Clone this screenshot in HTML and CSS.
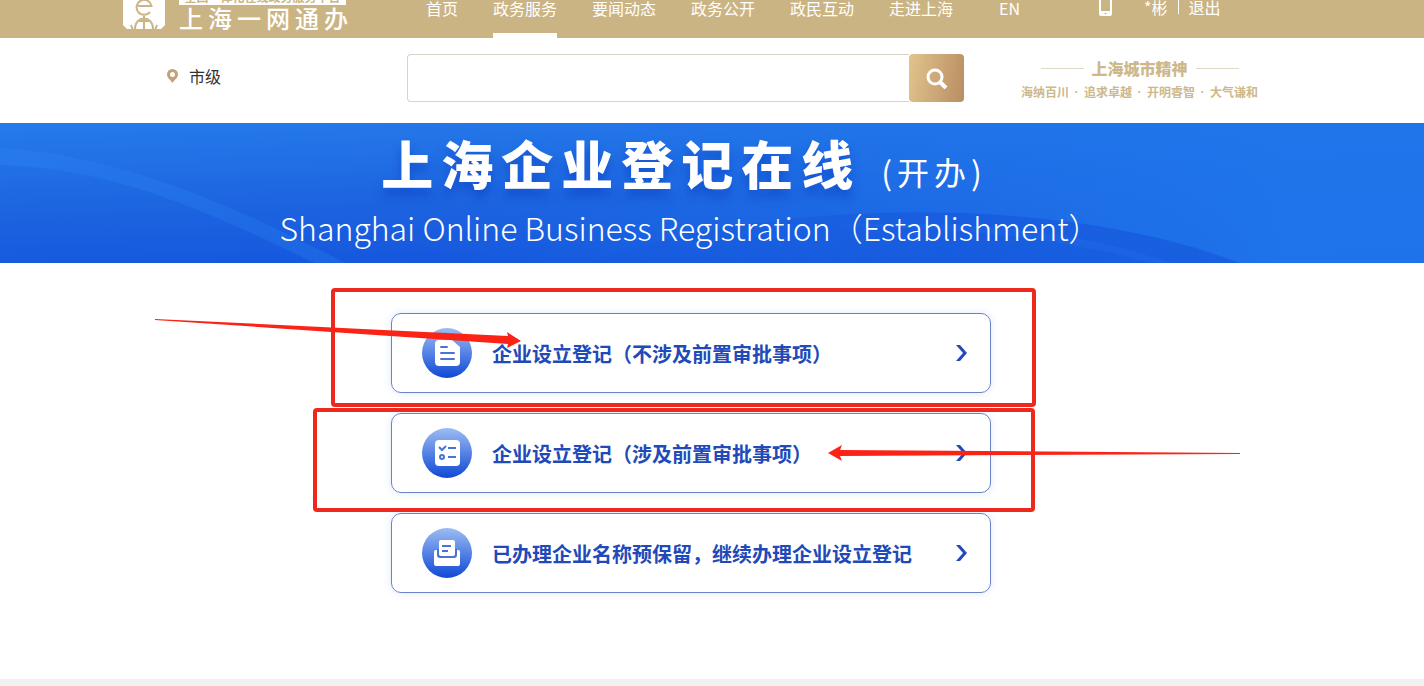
FILE: index.html
```
<!DOCTYPE html>
<html lang="zh-CN">
<head>
    <meta charset="UTF-8">
    <meta name="viewport" content="width=device-width, initial-scale=1.0">
    <title>上海企业登记在线</title>
    <link rel="stylesheet" href="styles.css">
</head>
<body>

    <header class="topbar">
        <a class="logo" href="#">
            <svg class="logo-mark" width="42" height="42" viewBox="0 0 42 42">
                <path d="M0 3Q0 0 3 0H39Q42 0 42 3V37L38 41H4L0 37Z" fill="#fff"/>
                <g fill="none" stroke="#cbb483" stroke-width="2">
                    <path d="M15 18H28.500A7.500 7.500 0 1 0 27 24"/>
                    <path d="M12 41C12 27 30 27 30 41M21 28V41M16 33H26"/>
                    <path d="M8 37L9.500 41M34 37L32.500 41"/>
                </g>
            </svg>
            <span class="logo-text">
                <span class="logo-tag">全国一体化在线政务服务平台</span>
                <span class="logo-name">上海一网通办</span>
            </span>
        </a>
        <nav class="nav">
            <a href="#">首页</a>
            <a href="#" class="active">政务服务</a>
            <a href="#">要闻动态</a>
            <a href="#">政务公开</a>
            <a href="#">政民互动</a>
            <a href="#">走进上海</a>
            <a href="#" class="lang">EN</a>
        </nav>
        <div class="user">
            <a href="#" class="phone" aria-label="手机版">
                <svg width="13" height="18" viewBox="0 0 13 18">
                    <path fill="#fff" fill-rule="evenodd" d="M2 0H11Q13 0 13 2V16Q13 18 11 18H2Q0 18 0 16V2Q0 0 2 0ZM2 2V13H11V2ZM5 15L6.500 16.500L8 15Z"/>
                </svg>
            </a>
            <a href="#">*彬</a>
            <span class="divider"></span>
            <a href="#">退出</a>
        </div>
    </header>

    <div class="toolbar">
        <a class="region" href="#">
            <svg width="11" height="14" viewBox="0 0 11 14">
                <path fill="#c4a077" fill-rule="evenodd" d="M5.500 0A5.500 5.500 0 0 1 11 5.500C11 9 7 11 5.500 14C4 11 0 9 0 5.500A5.500 5.500 0 0 1 5.500 0ZM5.500 3A2.500 2.500 0 1 0 5.500 8A2.500 2.500 0 1 0 5.500 3Z"/>
            </svg>
            市级
        </a>
        <form class="search">
            <input type="text" aria-label="搜索">
            <button type="button" aria-label="搜索">
                <svg width="22" height="22" viewBox="0 0 22 22" fill="none" stroke="#fff">
                    <circle cx="9" cy="10" r="7" stroke-width="3"/>
                    <path d="M14 15L20 21" stroke-width="4"/>
                </svg>
            </button>
        </form>
        <div class="slogan">
            <div class="slogan-title">上海城市精神</div>
            <div class="slogan-text">
                <span>海纳百川</span><i>·</i><span>追求卓越</span><i>·</i><span>开明睿智</span><i>·</i><span>大气谦和</span>
            </div>
        </div>
    </div>

    <section class="banner">
        <svg class="banner-bg" viewBox="0 0 1424 140" preserveAspectRatio="none">
            <defs>
                <linearGradient id="wave" x1="0" x2="1" y1="0" y2="0">
                    <stop offset="0" stop-color="#2b7ff0" stop-opacity=".5"/>
                    <stop offset="1" stop-color="#2376ea" stop-opacity=".4"/>
                </linearGradient>
                <linearGradient id="deep" x1="0" x2="1" y1="0" y2="0">
                    <stop offset="0" stop-color="#1350d8" stop-opacity="0.1"/>
                    <stop offset=".6" stop-color="#1350d8" stop-opacity=".5"/>
                    <stop offset="1" stop-color="#1350d8" stop-opacity=".5"/>
                </linearGradient>
            </defs>
            <path d="M0 25C120 32 240 85 345 140H315C220 95 120 45 0 42Z" fill="url(#wave)"/>
            <path d="M590 140C760 75 1060 70 1240 140Z" fill="url(#deep)"/>
            <path d="M830 103C970 95 1090 110 1170 140H1150C1060 115 960 104 830 103Z" fill="#2b76ee" fill-opacity=".2"/>
        </svg>
        <div class="banner-text">
            <h1>上海企业登记在线<span>(开办)</span></h1>
            <p>Shanghai Online Business Registration（Establishment）</p>
        </div>
    </section>

    <main class="main">
        <div class="entries">
            <a class="entry" href="#">
                <svg class="entry-icon" viewBox="0 0 50 50">
                    <defs>
                        <linearGradient id="disc" x1="0" x2="0" y1="0" y2="1">
                            <stop offset="0" stop-color="#9dbcf2"/>
                            <stop offset="1" stop-color="#0f49d6"/>
                        </linearGradient>
                    </defs>
                    <circle cx="25" cy="25" r="25" fill="url(#disc)"/>
                    <path d="M17 12H30L38 19V34Q38 38 34 38H17Q13 38 13 34V16Q13 12 17 12Z" fill="#fff"/>
                    <path d="M19 19H25M19 25H32M19 31H32" stroke="#4a74d4" stroke-width="2" stroke-linecap="round"/>
                </svg>
                <span class="entry-name">企业设立登记（不涉及前置审批事项）</span>
                <svg class="arrow" viewBox="0 0 12 16"><path d="M0 0H4L11 8L4 16H0L7 8Z"/></svg>
            </a>
            <a class="entry" href="#">
                <svg class="entry-icon" viewBox="0 0 50 50">
                    <circle cx="25" cy="25" r="25" fill="url(#disc)"/>
                    <rect x="13" y="12" width="25" height="26" rx="4" fill="#fff"/>
                    <g fill="none" stroke="#4a74d4" stroke-width="2">
                        <path d="M17 19L20 22L24 18M26 20H34M26 29H34"/>
                        <circle cx="20" cy="29" r="2"/>
                    </g>
                </svg>
                <span class="entry-name">企业设立登记（涉及前置审批事项）</span>
                <svg class="arrow" viewBox="0 0 12 16"><path d="M0 0H4L11 8L4 16H0L7 8Z"/></svg>
            </a>
            <a class="entry" href="#">
                <svg class="entry-icon" viewBox="0 0 50 50">
                    <circle cx="25" cy="25" r="25" fill="url(#disc)"/>
                    <path d="M14 22H36Q38 22 38 24V36Q38 38 36 38H14Q12 38 12 36V24Q12 22 14 22Z" fill="#fff"/>
                    <path d="M15 21V27Q15 30 18 30H32Q35 30 35 27V21Z" fill="#4a74d4"/>
                    <rect x="17" y="12" width="16" height="16" rx="2" fill="#fff"/>
                    <path d="M20 18H29M20 23H26" stroke="#4a74d4" stroke-width="2"/>
                </svg>
                <span class="entry-name">已办理企业名称预保留，继续办理企业设立登记</span>
                <svg class="arrow" viewBox="0 0 12 16"><path d="M0 0H4L11 8L4 16H0L7 8Z"/></svg>
            </a>

            <!-- red marks over the first two entries -->
            <svg class="marks" width="1100" height="240" viewBox="0 0 1100 240">
                <g fill="none" stroke="#ee281c" stroke-width="4">
                    <rect x="183" y="17" width="701" height="115" rx="2"/>
                    <rect x="165" y="137" width="718" height="100" rx="2"/>
                </g>
                <g fill="#fb2216">
                    <path d="M5 46L358 63L357 59L371 68L357 75L358 71L5 47Z"/>
                    <path d="M678 180L692 172L690 177L1090 180V181L690 183L692 188Z"/>
                </g>
            </svg>
        </div>
    </main>

    <footer class="footer"></footer>

</body>
</html>
```
FILE: styles.css
```
* {
    box-sizing: border-box;
}

body {
    margin: 0;
    min-height: 100vh;
    display: flex;
    flex-direction: column;
    background-color: #fff;
    color: #333;
    font-family: "Noto Sans CJK SC", sans-serif;
    font-size: 16px;
}

a {
    color: inherit;
    text-decoration: none;
}

svg {
    display: block;
    flex-shrink: 0;
}

/* Top bar */
.topbar {
    height: 38px;
    padding-left: 123px;
    display: flex;
    align-items: flex-end;
    background-color: #cbb483;
    color: #fff;
    overflow: hidden;
    white-space: nowrap;
}

.logo {
    width: 303px;
    display: flex;
    align-items: flex-end;
    gap: 14px;
    padding-bottom: 8px;
}

.logo-text {
    display: flex;
    flex-direction: column;
}

.logo-tag {
    width: 167px;
    background-color: #fff;
    color: #cbb483;
    font-size: 12px;
    font-weight: bold;
    line-height: 16px;
    text-align: center;
}

.logo-name {
    font-size: 24px;
    font-weight: 500;
    line-height: 25px;
    letter-spacing: 5px;
}

.nav {
    display: flex;
    gap: 35px;
}

.nav a {
    height: 46px;
    line-height: 32px;
    border-bottom: 5px solid transparent;
}

.nav .active {
    border-bottom-color: #fff;
}

.nav .lang {
    padding: 0 11px;
}

.user {
    display: flex;
    align-items: center;
    height: 46px;
    padding-bottom: 16px;
    margin-left: 68px;
}

.phone {
    margin-right: 32px;
}

.divider {
    width: 1px;
    height: 14px;
    margin: 0 10px;
    background-color: #fff;
}

/* Search row */
.toolbar {
    height: 85px;
    padding: 16px 0 0 167px;
    display: flex;
    align-items: flex-start;
}

.region {
    width: 240px;
    display: flex;
    align-items: center;
    gap: 11px;
    line-height: 44px;
}

.search {
    width: 557px;
    display: flex;
}

.search input {
    flex: 1;
    height: 48px;
    padding: 0 16px;
    border: 1px solid #d9d3c2;
    border-right: none;
    border-radius: 4px 0 0 4px;
    font-size: 16px;
}

.search button {
    width: 55px;
    height: 48px;
    padding: 0;
    display: flex;
    align-items: center;
    justify-content: center;
    border: none;
    border-radius: 4px;
    background: linear-gradient(100deg, #e2c48d, #b98d62);
    cursor: pointer;
}

.slogan {
    margin-left: 57px;
    color: #cdb88c;
    font-weight: bold;
    white-space: nowrap;
}

.slogan-title {
    display: flex;
    align-items: center;
    justify-content: center;
    gap: 8px;
    font-size: 16px;
    font-weight: 900;
    line-height: 28px;
}

.slogan-title::before,
.slogan-title::after {
    content: "";
    width: 43px;
    height: 1px;
    background-color: #e0d9c8;
}

.slogan-text {
    display: flex;
    gap: 5px;
    font-size: 12px;
    line-height: 20px;
}

.slogan-text i {
    width: 5px;
    font-family: "Liberation Sans", sans-serif;
    font-style: normal;
    text-align: center;
}

/* Banner */
.banner {
    position: relative;
    height: 140px;
    background:
        linear-gradient(to right, transparent 30%, rgba(32, 118, 236, 0.9) 90%),
        linear-gradient(178deg, #267bea 0%, #1c63e0 50%, #1250dc 100%);
    color: #fff;
    overflow: hidden;
}

.banner-bg {
    position: absolute;
    inset: 0;
    width: 100%;
    height: 100%;
}

.banner-text {
    position: relative;
    display: flex;
    flex-direction: column;
    align-items: center;
    padding-right: 44px;
    white-space: nowrap;
}

.banner h1 {
    height: 80px;
    margin: 0;
    padding-right: 12px;
    font-size: 52px;
    font-weight: 900;
    line-height: 80px;
    letter-spacing: 8px;
    text-shadow: 0 8px 10px rgba(10, 60, 190, 0.5);
}

.banner h1 span {
    margin-left: 20px;
    font-size: 32px;
    font-weight: 400;
    letter-spacing: 5px;
    text-shadow: none;
}

.banner p {
    margin: 0;
    font-size: 32px;
    font-weight: 300;
    line-height: 48px;
}

/* Entries */
.main {
    flex: 1;
    padding: 50px 42px 86px 0;
}

.entries {
    position: relative;
    width: 600px;
    margin: 0 auto;
    display: flex;
    flex-direction: column;
    gap: 20px;
}

.entry {
    height: 80px;
    padding: 0 22px 0 30px;
    display: flex;
    align-items: center;
    border: 1px solid #6a83c4;
    border-radius: 10px;
    box-shadow: 0 0 8px rgba(40, 110, 230, 0.15);
    color: #2149b8;
}

.entry-icon {
    width: 50px;
    height: 50px;
}

.entry-name {
    flex: 1;
    margin-left: 20px;
    font-size: 20px;
    font-weight: bold;
}

.arrow {
    width: 12px;
    height: 16px;
    fill: #2149b8;
}

.marks {
    position: absolute;
    left: -241px;
    top: -40px;
    pointer-events: none;
}

.footer {
    height: 7px;
    background-color: #f1f1f1;
}
```
